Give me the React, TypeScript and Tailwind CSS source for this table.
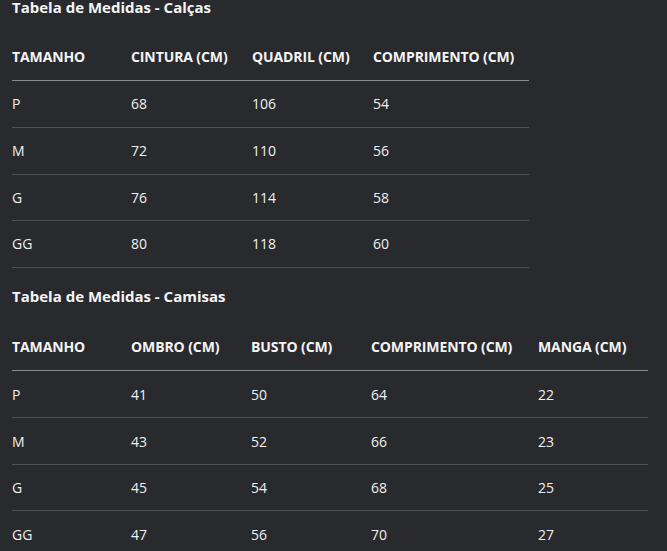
import React from "react";

type T = { title: string; headers: string[]; widths: number[]; rows: string[][] };

const tables: T[] = [
  {
    title: "Tabela de Medidas - Calças",
    headers: ["TAMANHO", "CINTURA (CM)", "QUADRIL (CM)", "COMPRIMENTO (CM)"],
    widths: [119, 121, 121, 156],
    rows: [
      ["P", "68", "106", "54"],
      ["M", "72", "110", "56"],
      ["G", "76", "114", "58"],
      ["GG", "80", "118", "60"],
    ],
  },
  {
    title: "Tabela de Medidas - Camisas",
    headers: ["TAMANHO", "OMBRO (CM)", "BUSTO (CM)", "COMPRIMENTO (CM)", "MANGA (CM)"],
    widths: [119, 120, 120, 167, 110],
    rows: [
      ["P", "41", "50", "64", "22"],
      ["M", "43", "52", "66", "23"],
      ["G", "45", "54", "68", "25"],
      ["GG", "47", "56", "70", "27"],
    ],
  },
];

const rowH = ["h-[47px]", "h-[47px]", "h-[46px]", "h-[47px]"];

function SizeTable({ t, first }: { t: T; first: boolean }) {
  return (
    <section className={first ? "" : "mt-[21px]"}>
      <h3
        className={`text-[15px] font-bold leading-[15px] text-[#f4f4f4] ${first ? "mb-[18px]" : "mb-[20px]"}`}
      >
        {t.title}
      </h3>
      <table className="border-collapse table-fixed" style={{ width: t.widths.reduce((a, b) => a + b, 0) }}>
        <colgroup>
          {t.widths.map((w, i) => (
            <col key={i} style={{ width: w }} />
          ))}
        </colgroup>
        <thead>
          <tr className="h-[47px] border-b border-[#8a8a8a]">
            {t.headers.map((h) => (
              <th key={h} className="p-0 text-left align-middle text-[14px] font-bold tracking-[-0.1px] text-[#f4f4f4] whitespace-nowrap">
                {h}
              </th>
            ))}
          </tr>
        </thead>
        <tbody>
          {t.rows.map((r, i) => (
            <tr key={i} className={`${rowH[i]} border-b border-[#505155]`}>
              {r.map((c, j) => (
                <td key={j} className="p-0 text-left align-middle text-[14px] text-[#f0f0f0]">
                  {c}
                </td>
              ))}
            </tr>
          ))}
        </tbody>
      </table>
    </section>
  );
}

export default function App() {
  return (
    <div
      className="min-h-[551px] w-[667px] bg-[#292a2e] px-[12px] overflow-hidden"
      style={{ fontFamily: '"Open Sans", "Noto Sans", sans-serif' }}
    >
      {tables.map((t, i) => (
        <SizeTable key={t.title} t={t} first={i === 0} />
      ))}
    </div>
  );
}
